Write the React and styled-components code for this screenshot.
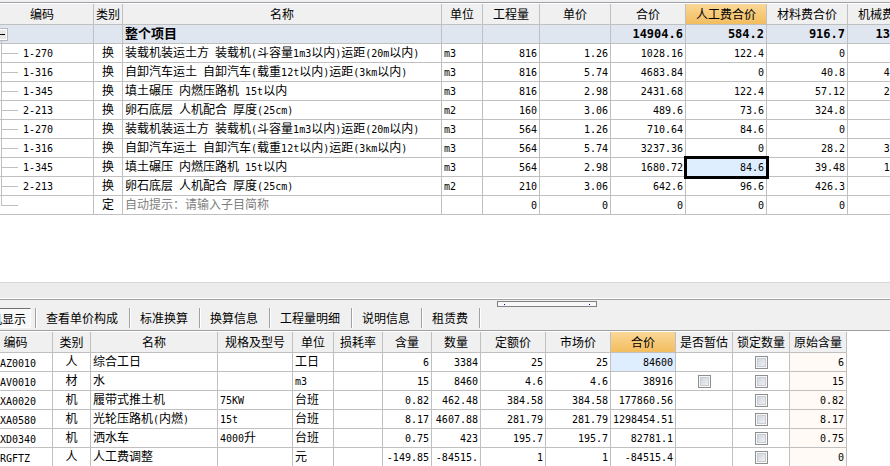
import React from 'react';
import styled, { createGlobalStyle, ThemeProvider } from 'styled-components';

const theme = {
  colors: {
    line: '#c0c0c0',
    panel: '#f0f0f0',
    total: '#dfe6f0',
    selected: '#dfeeff',
    original: '#fffaf5',
    hint: '#808080',
  },
  fonts: {
    text: '"Noto Sans CJK SC", sans-serif',
    mono: '"DejaVu Sans Mono", monospace',
  },
};

const GlobalStyle = createGlobalStyle`
  * {
    box-sizing: border-box;
  }
  body {
    margin: 0;
    background: #fff;
    color: #000;
  }
`

const Layout = styled.div`
  display: flex;
  flex-direction: column;
  height: 100vh;
  overflow: hidden;
  font-family: ${({ theme }) => theme.fonts.text};
  font-size: 12px;
  line-height: 16px;
`

const TopEdge = styled.div`
  flex: none;
  height: 4px;
  background: ${({ theme }) => theme.colors.panel};
  border-bottom: 1px solid #fff;
  box-shadow: inset 0 -1px 0 #a0a0a8;
`

const ItemPane = styled.section`
  flex: none;
  padding-bottom: 67px;
  overflow: hidden;
`

const DetailPane = styled.section`
  flex: 1;
  min-height: 0;
  overflow: hidden;
`

// grids are scrolled a little to the right
const Grid = styled.table`
  width: 0;
  margin-left: -${({ $scroll }) => $scroll}px;
  table-layout: fixed;
  border-collapse: separate;
  border-spacing: 0;
`

const Col = styled.col`
  width: ${({ $width }) => $width}px;
`

const HeadCell = styled.th`
  height: 21px;
  padding: 0;
  font-weight: normal;
  text-align: center;
  white-space: nowrap;
  overflow: hidden;
  background: ${({ theme, $active }) => $active ? 'linear-gradient(#fad797, #f2bd5e)' : theme.colors.panel};
  border-right: 1px solid ${({ theme }) => theme.colors.line};
  border-bottom: 1px solid ${({ theme }) => theme.colors.line};
`

const Row = styled.tr`
  background: ${({ theme, $total }) => $total ? theme.colors.total : '#fff'};
  font-size: ${({ $total }) => $total ? 13 : 12}px;
  font-weight: ${({ $total }) => $total ? 'bold' : 'normal'};
`

const Cell = styled.td`
  height: 19px;
  padding: 0 2px 2px;
  text-align: ${({ $align }) => $align || 'left'};
  vertical-align: middle;
  white-space: nowrap;
  overflow: hidden;
  border-right: 1px solid ${({ theme }) => theme.colors.line};
  border-bottom: 1px solid ${({ theme }) => theme.colors.line};
  ${({ theme, $shade }) => $shade && `background: ${theme.colors[$shade]};`}
  ${({ $focused }) => $focused && 'outline: 3px solid #000; outline-offset: -1px;'}
`

const CodeCell = styled(Cell)`
  padding: 0 0 0 ${({ $indent }) => $indent || 0}px;
`

const PlainCell = styled(Cell)`
  padding: 0 2px;
`

const Latin = styled.span`
  font-family: ${({ theme }) => theme.fonts.mono};
  font-size: ${({ $big }) => $big ? 12 : 10}px;
  line-height: 10px;
`

const TreeCode = styled.div`
  display: flex;
  align-items: center;
  gap: 5px;
  height: 18px;
  ${Latin} {
    padding-top: 2px;
  }
`

const HintInput = styled.input`
  display: block;
  width: 100%;
  height: 16px;
  padding: 0;
  border: none;
  outline: none;
  background: transparent;
  font: inherit;
  &::placeholder {
    color: ${({ theme }) => theme.colors.hint};
    opacity: 1;
  }
`

const Check = styled.input`
  appearance: none;
  display: block;
  width: 13px;
  height: 13px;
  margin: 0 auto;
  border: 1px solid #8e8f8f;
  background: linear-gradient(135deg, #c8ced8, #f8f8f8);
  box-shadow: inset 0 0 0 1px #f8f8f8, inset 0 0 0 2px #c8ccd4;
`

const Splitter = styled.div`
  flex: none;
  position: relative;
  height: 18px;
  background: #ececec;
  border-top: 1px solid #d8d8d8;
  border-bottom: 1px solid #a0a0a0;
  box-shadow: inset 0 -1px 0 #fff;
`

const Handle = styled.div`
  position: absolute;
  top: 18px;
  left: 497px;
  display: flex;
  justify-content: space-between;
  align-items: center;
  width: 100px;
  height: 6px;
  padding: 0 6px;
  background: #f8f8f8;
  border: 1px solid #808080;
`

const Dot = styled.span`
  width: 1px;
  height: 1px;
  background: #0000a0;
`

const Toolbar = styled.nav`
  flex: none;
  display: flex;
  height: 32px;
  padding: 8px 0 2px;
  margin-left: -39px;
  background: ${({ theme }) => theme.colors.panel};
  border-bottom: 1px solid #fff;
  box-shadow: inset 0 -1px 0 #a0a0a0;
`

const ToolButton = styled.button`
  height: 20px;
  padding: 0 11px 0 9px;
  border: none;
  background: none;
  color: #000;
  font: inherit;
  line-height: 20px;
  white-space: nowrap;
`

const PressedButton = styled(ToolButton)`
  margin-right: 4px;
  padding: 0 4px;
  border: 1px solid;
  border-color: #707070 #fff #fff #707070;
  background: #f8f8f8;
`

const Separator = styled.span`
  width: 2px;
  height: 20px;
  border-left: 1px solid #a0a0a0;
  border-right: 1px solid #fff;
`

const itemColumns = [
  ['编码', 103], ['类别', 29], ['名称', 319], ['单位', 41], ['工程量', 57],
  ['单价', 71], ['合价', 75], ['人工费合价', 81], ['材料费合价', 81], ['机械费合价', 81],
];

const LOADER = '装载机装运土方 装载机(斗容量1m3以内)运距(20m以内)';
const DUMPER = '自卸汽车运土 自卸汽车(载重12t以内)运距(3km以内)';
const ROLLER = '填土碾压 内燃压路机 15t以内';
const PEBBLE = '卵石底层 人机配合 厚度(25cm)';

const items = [
  ['1-270', '换', LOADER, 'm3', '816', '1.26', '1028.16', '122.4', '0', '905.76'],
  ['1-316', '换', DUMPER, 'm3', '816', '5.74', '4683.84', '0', '40.8', '4643.04'],
  ['1-345', '换', ROLLER, 'm3', '816', '2.98', '2431.68', '122.4', '57.12', '2252.16'],
  ['2-213', '换', PEBBLE, 'm2', '160', '3.06', '489.6', '73.6', '324.8', '91.2'],
  ['1-270', '换', LOADER, 'm3', '564', '1.26', '710.64', '84.6', '0', '626.04'],
  ['1-316', '换', DUMPER, 'm3', '564', '5.74', '3237.36', '0', '28.2', '3209.16'],
  ['1-345', '换', ROLLER, 'm3', '564', '2.98', '1680.72', '84.6', '39.48', '1556.64'],
  ['2-213', '换', PEBBLE, 'm2', '210', '3.06', '642.6', '96.6', '426.3', '119.7'],
  ['', '定', null, '', '0', '0', '0', '0', '0', '0'],
];

const total = ['', '', '整个项目', '', '', '', '14904.6', '584.2', '916.7', '13403.7'];

const detailColumns = [
  ['编码', 74], ['类别', 38], ['名称', 127], ['规格及型号', 75], ['单位', 41],
  ['损耗率', 49], ['含量', 49], ['数量', 49], ['定额价', 65], ['市场价', 65],
  ['合价', 65], ['是否暂估', 57], ['锁定数量', 57], ['原始含量', 57],
];

const details = [
  ['AZ0010', '人', '综合工日', '', '工日', '', '6', '3384', '25', '25', '84600', false, true, '6'],
  ['AV0010', '材', '水', '', 'm3', '', '15', '8460', '4.6', '4.6', '38916', true, true, '15'],
  ['XA0020', '机', '履带式推土机', '75KW', '台班', '', '0.82', '462.48', '384.58', '384.58', '177860.56', false, true, '0.82'],
  ['XA0580', '机', '光轮压路机(内燃)', '15t', '台班', '', '8.17', '4607.88', '281.79', '281.79', '1298454.51', false, true, '8.17'],
  ['XD0340', '机', '洒水车', '4000升', '台班', '', '0.75', '423', '195.7', '195.7', '82781.1', false, true, '0.75'],
  ['RGFTZ', '人', '人工费调整', '', '元', '', '-149.85', '-84515.', '1', '1', '-84515.4', false, true, '0'],
];

const tools = ['查看单价构成', '标准换算', '换算信息', '工程量明细', '说明信息', '租赁费'];

// half-width characters get the mono font so columns line up
function Mixed({ text, big }) {
  return text.split(/([\x20-\x7e]+)/).filter(Boolean).map((part, i) => (
    /^[\x20-\x7e]/.test(part) ? <Latin key={i} $big={big}>{part}</Latin> : part
  ));
}

function Branch({ last }) {
  return (
    <svg width="27" height="18" shapeRendering="crispEdges" aria-hidden="true">
      <rect x="10" y="0" width="1" height={last ? 10 : 18} fill="#c0c0c0" />
      <rect x="10" y="9" width="17" height="1" fill="#c0c0c0" />
    </svg>
  );
}

function Collapse() {
  return (
    <svg width="27" height="18" shapeRendering="crispEdges" aria-hidden="true">
      <rect x="10" y="16" width="1" height="2" fill="#c0c0c0" />
      <rect x="4" y="3" width="13" height="13" fill="#b8b8b8" />
      <rect x="5" y="4" width="11" height="11" fill="#fff" />
      <rect x="6" y="5" width="9" height="9" fill="#e8e8e8" />
      <rect x="7" y="9" width="7" height="1" fill="#000" />
    </svg>
  );
}

function Head({ columns, active }) {
  return (
    <>
      <colgroup>
        {columns.map(([name, width]) => <Col key={name} $width={width} />)}
      </colgroup>
      <thead>
        <tr>
          {columns.map(([name]) => <HeadCell key={name} $active={name === active}>{name}</HeadCell>)}
        </tr>
      </thead>
    </>
  );
}

function ItemRow({ item, isTotal, isLast, focused }) {
  return (
    <Row $total={isTotal}>
      <CodeCell>
        <TreeCode>
          {isTotal ? <Collapse /> : <Branch last={isLast} />}
          <Mixed text={item[0]} />
        </TreeCode>
      </CodeCell>
      <Cell $align="center">{item[1]}</Cell>
      <Cell>
        {item[2] === null
          ? <HintInput type="text" aria-label="子目简称" placeholder="自动提示：请输入子目简称" />
          : <Mixed text={item[2]} />}
      </Cell>
      <Cell><Mixed text={item[3]} /></Cell>
      {item.slice(4).map((value, i) => {
        const on = focused && i === 3;
        return (
          <Cell key={i} $align="right" $focused={on} $shade={on ? 'selected' : undefined}>
            <Mixed text={value} big={isTotal} />
          </Cell>
        );
      })}
    </Row>
  );
}

function DetailRow({ item, selected }) {
  return (
    <Row>
      <CodeCell $indent={21}><Mixed text={item[0]} /></CodeCell>
      <Cell $align="center">{item[1]}</Cell>
      {item.slice(2, 6).map((value, i) => <Cell key={i}><Mixed text={value} /></Cell>)}
      {item.slice(6, 11).map((value, i) => (
        <Cell key={i} $align="right" $shade={selected && i === 4 ? 'selected' : undefined}>
          <Mixed text={value} />
        </Cell>
      ))}
      <PlainCell>{item[11] && <Check type="checkbox" aria-label="是否暂估" />}</PlainCell>
      <PlainCell>{item[12] && <Check type="checkbox" aria-label="锁定数量" />}</PlainCell>
      <Cell $align="right" $shade="original"><Mixed text={item[13]} /></Cell>
    </Row>
  );
}

export default function App() {
  return (
    <ThemeProvider theme={theme}>
      <GlobalStyle />
      <Layout>
        <TopEdge />
        <ItemPane>
          <Grid $scroll={9}>
            <Head columns={itemColumns} active="人工费合价" />
            <tbody>
              <ItemRow item={total} isTotal />
              {items.map((item, i) => (
                <ItemRow key={i} item={item} isLast={i === items.length - 1} focused={i === 6} />
              ))}
            </tbody>
          </Grid>
        </ItemPane>
        <Splitter>
          <Handle><Dot /><Dot /></Handle>
        </Splitter>
        <Toolbar>
          <PressedButton type="button" aria-pressed="true">工料机显示</PressedButton>
          <Separator />
          {tools.map((name) => (
            <React.Fragment key={name}>
              <ToolButton type="button">{name}</ToolButton>
              <Separator />
            </React.Fragment>
          ))}
        </Toolbar>
        <DetailPane>
          <Grid $scroll={21}>
            <Head columns={detailColumns} active="合价" />
            <tbody>
              {details.map((item, i) => <DetailRow key={item[0]} item={item} selected={i === 0} />)}
            </tbody>
          </Grid>
        </DetailPane>
      </Layout>
    </ThemeProvider>
  );
}
